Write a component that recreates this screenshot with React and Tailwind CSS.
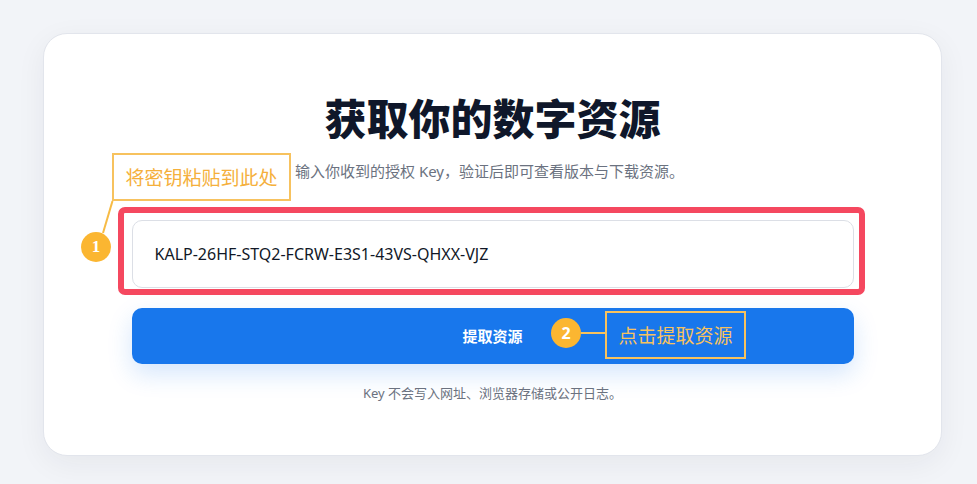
export default function App() {
  const sans = { fontFamily: '"Noto Sans", "Noto Sans CJK SC", sans-serif' };
  const cjk = { fontFamily: '"Noto Sans CJK SC", sans-serif' };
  return (
    <div className="w-[977px] h-[484px] bg-[#f2f4f8] pt-[33px] pl-[43px] overflow-hidden" style={sans}>
      <div className="relative w-[899px] h-[423px] bg-white rounded-[24px] border border-[#e2e5ec] shadow-[0_8px_30px_rgba(30,41,59,0.06)] flex flex-col items-center pt-[57px]">
        <h1 className="text-[42px] leading-[52px] font-black text-[#0f172a]" style={cjk}>获取你的数字资源</h1>
        <p className="mt-[17px] ml-[-6px] text-[15px] leading-[22px] text-[#6b7280]">输入你收到的授权 Key，验证后即可查看版本与下载资源。</p>

        <div className="relative mt-[38px] w-[722px]">
          <div className="absolute left-[-14px] right-[-11px] top-[-13px] bottom-[-7px] border-[6px] border-[#f5485f] rounded-[7px] pointer-events-none"></div>
          <div className="h-[68px] rounded-[10px] border border-[#dcdfe6] bg-white flex items-center pl-[22px] text-[16px] text-[#111827]">
            KALP-26HF-STQ2-FCRW-E3S1-43VS-QHXX-VJZ
          </div>
        </div>

        <button className="mt-[20px] w-[722px] h-[56px] rounded-[10px] bg-[#1877ec] text-white text-[15px] font-bold shadow-[0_10px_24px_rgba(24,119,236,0.18)]" style={cjk}>
          提取资源
        </button>

        <p className="mt-[19px] text-[13px] leading-[20px] text-[#6b7280]">Key 不会写入网址、浏览器存储或公开日志。</p>

        {/* annotation 1 */}
        <div className="absolute left-[68px] top-[119px] w-[179px] h-[48px] border-2 border-[#f7c25e] bg-white/80 flex items-center justify-center text-[19px] text-[#f5b03c]" style={cjk}>
          将密钥粘贴到此处
        </div>
        <svg className="absolute left-[50px] top-[164px]" width="30" height="40" viewBox="0 0 30 40">
          <line x1="18.5" y1="3" x2="9" y2="35" stroke="#f7bb45" strokeWidth="2" />
        </svg>
        <div className="absolute left-[37px] top-[198px] w-[30px] h-[30px] rounded-full bg-[#fbb631] flex items-center justify-center text-white text-[17px] font-bold" style={{ fontFamily: '"Liberation Serif", serif' }}>
          1
        </div>

        {/* annotation 2 */}
        <div className="absolute left-[507px] top-[284px] w-[30px] h-[30px] rounded-full bg-[#fbb631] flex items-center justify-center text-white text-[16px] font-bold">
          2
        </div>
        <div className="absolute left-[537px] top-[298px] w-[24px] h-[2px] bg-[#f7c25e]"></div>
        <div className="absolute left-[561px] top-[277px] w-[141px] h-[48px] border-2 border-[#f7c25e] flex items-center justify-center text-[19px] text-[#f7c25e]" style={cjk}>
          点击提取资源
        </div>
      </div>
    </div>
  );
}
